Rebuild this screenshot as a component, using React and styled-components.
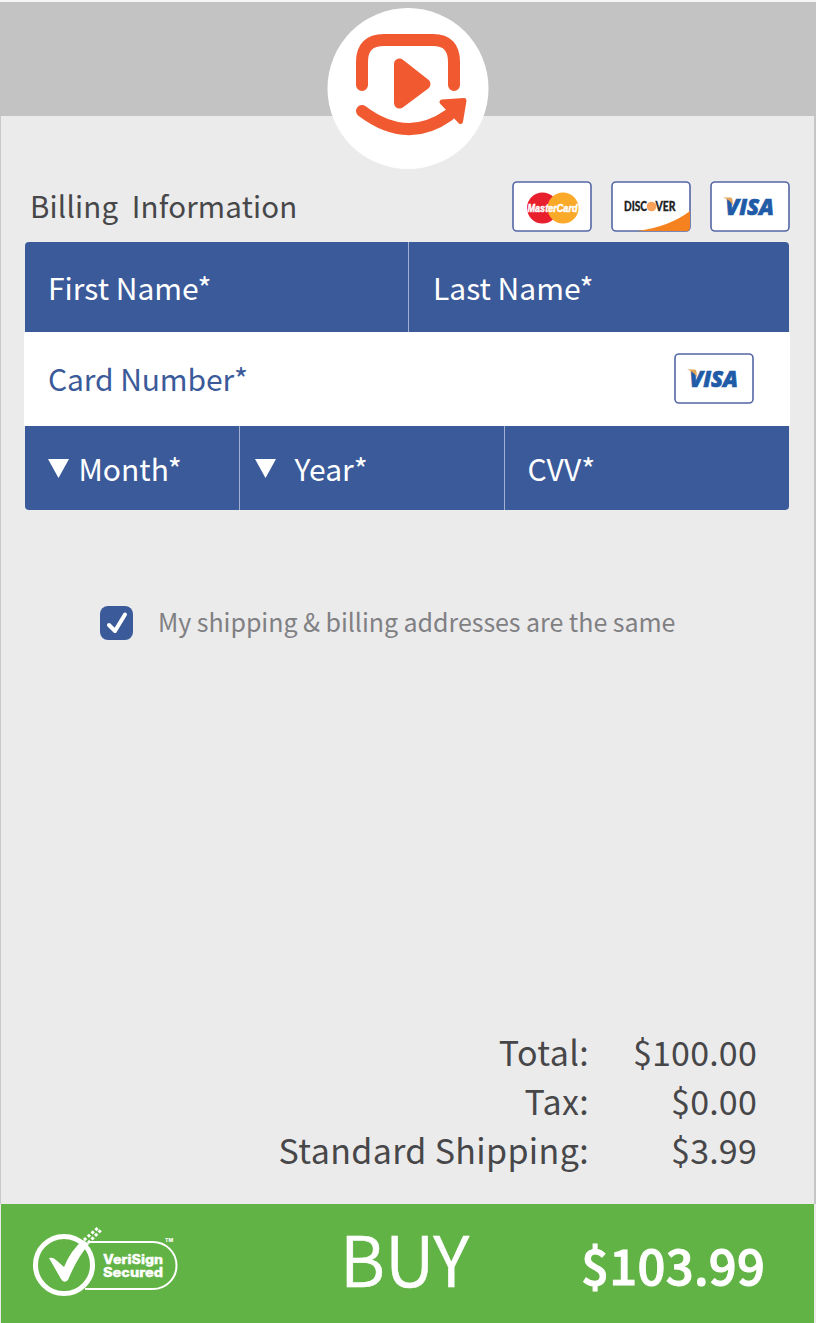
import React from "react";
import styled, { createGlobalStyle } from "styled-components";

const BLUE = "#3b5a9a";
const ORANGE = "#f15a31";

const GlobalStyle = createGlobalStyle`
  * { box-sizing: border-box; }
  body { margin: 0; background: #ebebec; font-family: "Noto Sans CJK SC", "Open Sans", sans-serif; }
`;

const Page = styled.div`
  width: 816px;
  height: 1323px;
  overflow: hidden;
  display: flex;
  flex-direction: column;
  background: #ebebec;
  border-top: 2px solid #f6f6f6;
`;
const Header = styled.header`
  height: 114px;
  flex: none;
  background: #c3c3c3;
  display: flex;
  justify-content: center;
  padding: 6px 1px 0 0;
`;
const Logo = styled.svg`
  width: 162px;
  height: 162px;
  flex: none;
  position: relative;
`;
const Body = styled.main`
  flex: 1;
  display: flex;
  flex-direction: column;
  border-left: 1px solid #c9c9c9;
  border-right: 2px solid #c6c6c6;
  padding: 65px 24px 0 23px;
`;
const TitleRow = styled.div`
  display: flex;
  height: 51px;
  gap: 19px;
  align-items: center;
  padding-left: 6px;
`;
const Text = styled.span`
  white-space: pre;
  font-size: ${(p) => p.$size}px;
  line-height: ${(p) => p.$line || 40}px;
  letter-spacing: ${(p) => p.$track || 0}px;
  color: ${(p) => p.$color || "#fff"};
  font-weight: ${(p) => p.$weight || 400};
  -webkit-text-stroke: ${(p) => p.$stroke || 0}px currentColor;
`;
const Title = styled.h1`
  margin: 0;
  flex: 1;
  display: flex;
  padding-bottom: 3px;
`;
const CardSvg = styled.svg`
  width: 80px;
  height: 51px;
  flex: none;
  display: block;
`;
const Form = styled.section`
  display: flex;
  flex-direction: column;
  margin-top: 10px;
`;
const FieldRow = styled.div`
  display: grid;
  grid-template-columns: ${(p) => p.$cols};
  height: ${(p) => p.$h}px;
  margin: 0 1px 0 0.5px;
  background: ${BLUE};
  border-radius: ${(p) => p.$radius};
`;
const CardRow = styled.div`
  height: 94px;
  background: #fff;
  display: flex;
  align-items: center;
  justify-content: space-between;
  padding: 0 36px 2px 24px;
`;
const Field = styled.div`
  display: flex;
  align-items: center;
  padding-left: ${(p) => p.$pad}px;
  gap: ${(p) => p.$gap || 0}px;
  border-left: ${(p) => (p.$divided ? "1.5px solid #a3b1d4" : "0")};
`;
const Caret = styled.svg`
  width: 21px;
  height: 19px;
  flex: none;
`;
const SameAddress = styled.label`
  display: flex;
  align-items: center;
  margin-top: 91px;
  padding-left: 76px;
  gap: 25px;
`;
const CheckBox = styled.svg`
  width: 33px;
  height: 34px;
  flex: none;
`;
const SameText = styled.span`
  display: flex;
  padding-bottom: 3px;
`;
const Totals = styled.dl`
  margin: auto 33px 30px 0;
  display: grid;
  grid-template-columns: 1fr 168px;
  grid-auto-rows: 49px;
  justify-items: end;
`;
const Cell = styled.div`
  display: flex;
`;
const Footer = styled.footer`
  height: 119px;
  flex: none;
  margin: 0 2px 0 1px;
  background: #62b346;
  display: grid;
  grid-template-columns: 339px 241px 1fr;
  align-items: center;
`;
const BuyLabel = styled.span`
  display: flex;
  padding-bottom: 13px;
`;
const Seal = styled.svg`
  width: 150px;
  height: 76px;
  margin: 0 0 11px 30px;
`;

function Frame({ children }) {
  return (
    <CardSvg viewBox="0 0 80 51">
      <rect x="1" y="1" width="78" height="49" rx="4" fill="#fff" stroke="#5367a5" strokeWidth="1.6" />
      {children}
    </CardSvg>
  );
}

function Visa() {
  return (
    <Frame>
      <text x="15.500" y="33.500" fontFamily="Open Sans" fontWeight="800" fontStyle="italic" fontSize="23.500" textLength="48.500" lengthAdjust="spacingAndGlyphs" fill="#1f5ba6" stroke="#1f5ba6" strokeWidth=".7">VISA</text>
      <path d="M13 16.500h7.500q1.600 0 1.900 2l.6 6q-3.200-6-10-8z" fill="#e3a45a" />
    </Frame>
  );
}

function MasterCard() {
  return (
    <Frame>
      <circle cx="30.500" cy="27" r="15.500" fill="#e8202e" />
      <circle cx="51" cy="27" r="15.500" fill="#fba928" />
      <text x="15.500" y="31" fontFamily="Liberation Sans" fontWeight="700" fontStyle="italic" fontSize="11.500" textLength="50" lengthAdjust="spacingAndGlyphs" fill="#fff" stroke="#fff" strokeWidth=".5">MasterCard</text>
    </Frame>
  );
}

function Discover() {
  return (
    <Frame>
      <path d="M26 50Q58 46 79 30V46a4 4 0 0 1-4 4z" fill="#f6821f" />
      <circle cx="40.500" cy="25.500" r="4.800" fill="#f7a25b" />
      <g fontFamily="Lato" fontWeight="900" fontSize="13" fill="#222" stroke="#222" strokeWidth=".3">
        <text x="13" y="30" textLength="23" lengthAdjust="spacingAndGlyphs">DISC</text>
        <text x="44.500" y="30" textLength="20" lengthAdjust="spacingAndGlyphs">VER</text>
      </g>
    </Frame>
  );
}

function Down() {
  return (
    <Caret viewBox="0 0 21 19">
      <path d="M0 0h21L10.500 19z" fill="#fff" />
    </Caret>
  );
}

const totals = [
  ["Total:", "$100.00"],
  ["Tax:", "$0.00"],
  ["Standard Shipping:", "$3.99"],
];

export default function App() {
  return (
    <>
      <GlobalStyle />
      <Page>
        <Header>
          <Logo viewBox="0 0 162 162">
            <circle cx="81" cy="80.500" r="80.500" fill="#fff" />
            <g fill="none" stroke={ORANGE} strokeWidth="12" strokeLinecap="round" strokeLinejoin="round">
              <path d="M35 77V54Q35 32 57 32H106Q127 32 127 54V77" />
              <path d="M35 103Q80 137 122 107" />
            </g>
            <g fill={ORANGE} stroke={ORANGE} strokeLinejoin="round">
              <path d="M72.500 56V95L98 76Z" strokeWidth="11" />
              <path d="M115 94L137 92.500L133.500 113.500Z" strokeWidth="5" />
            </g>
          </Logo>
        </Header>
        <Body>
          <TitleRow>
            <Title>
              <Text $size={29.5} $track={0.17} $color="#474749">Billing  Information</Text>
            </Title>
            <MasterCard />
            <Discover />
            <Visa />
          </TitleRow>
          <Form>
            <FieldRow $cols="383px 1fr" $h={90} $radius="4px 4px 0 0">
              <Field $pad={23.5}><Text $size={30}>First Name*</Text></Field>
              <Field $pad={24.5} $divided><Text $size={30}>Last Name*</Text></Field>
            </FieldRow>
            <CardRow>
              <Text $size={30} $track={-0.1} $color={BLUE}>Card Number*</Text>
              <Visa />
            </CardRow>
            <FieldRow $cols="214px 265px 1fr" $h={84} $radius="0 0 4px 4px">
              <Field $pad={23} $gap={10}><Down /><Text $size={30}>Month*</Text></Field>
              <Field $pad={15} $gap={19} $divided><Down /><Text $size={30}>Year*</Text></Field>
              <Field $pad={23} $divided><Text $size={30}>CVV*</Text></Field>
            </FieldRow>
          </Form>
          <SameAddress>
            <CheckBox viewBox="0 0 33 34">
              <rect width="33" height="34" rx="8" fill={BLUE} />
              <path d="M9 19l6 6L25 8.500" fill="none" stroke="#fff" strokeWidth="4" strokeLinecap="round" strokeLinejoin="round" />
            </CheckBox>
            <SameText>
              <Text $size={25} $track={-0.04} $color="#808083">My shipping &amp; billing addresses are the same</Text>
            </SameText>
          </SameAddress>
          <Totals>
            {totals.map(([label, value]) => (
              <React.Fragment key={label}>
                <Cell><Text $size={34} $line={49} $track={0.35} $color="#474749">{label}</Text></Cell>
                <Cell><Text $size={34} $line={49} $track={0.2} $color="#474749">{value}</Text></Cell>
              </React.Fragment>
            ))}
          </Totals>
        </Body>
        <Footer>
          <Seal viewBox="0 0 150 76">
            <path d="M58 22H122a23.500 23.500 0 0 1 0 47H54" fill="none" stroke="#fff" strokeWidth="2" />
            <circle cx="33" cy="45" r="28.500" fill="#62b346" stroke="#fff" strokeWidth="5" />
            <path d="M18 38q4-1 7 2l8 7Q40 30 52 20l6 4Q46 38 37 60q-4 4-7-1Z" fill="#fff" />
            <path d="M53 20l15-13M57 23l13-13" stroke="#fff" strokeWidth="3" strokeDasharray="3 2" />
            <g fontFamily="Inter" fontWeight="800" fill="#fff" stroke="#fff" strokeWidth=".3">
              <text x="72" y="44" fontSize="12.500" textLength="60" lengthAdjust="spacingAndGlyphs">VeriSign</text>
              <text x="72" y="56.500" fontSize="12.500" textLength="60" lengthAdjust="spacingAndGlyphs">Secured</text>
              <text x="134" y="22" fontSize="5" strokeWidth="0">TM</text>
            </g>
          </Seal>
          <BuyLabel><Text $size={69} $line={90} $weight={350} $stroke={0.6}>BUY</Text></BuyLabel>
          <Text $size={49} $line={70} $weight={500} $stroke={1} $track={0.3}>$103.99</Text>
        </Footer>
      </Page>
    </>
  );
}
